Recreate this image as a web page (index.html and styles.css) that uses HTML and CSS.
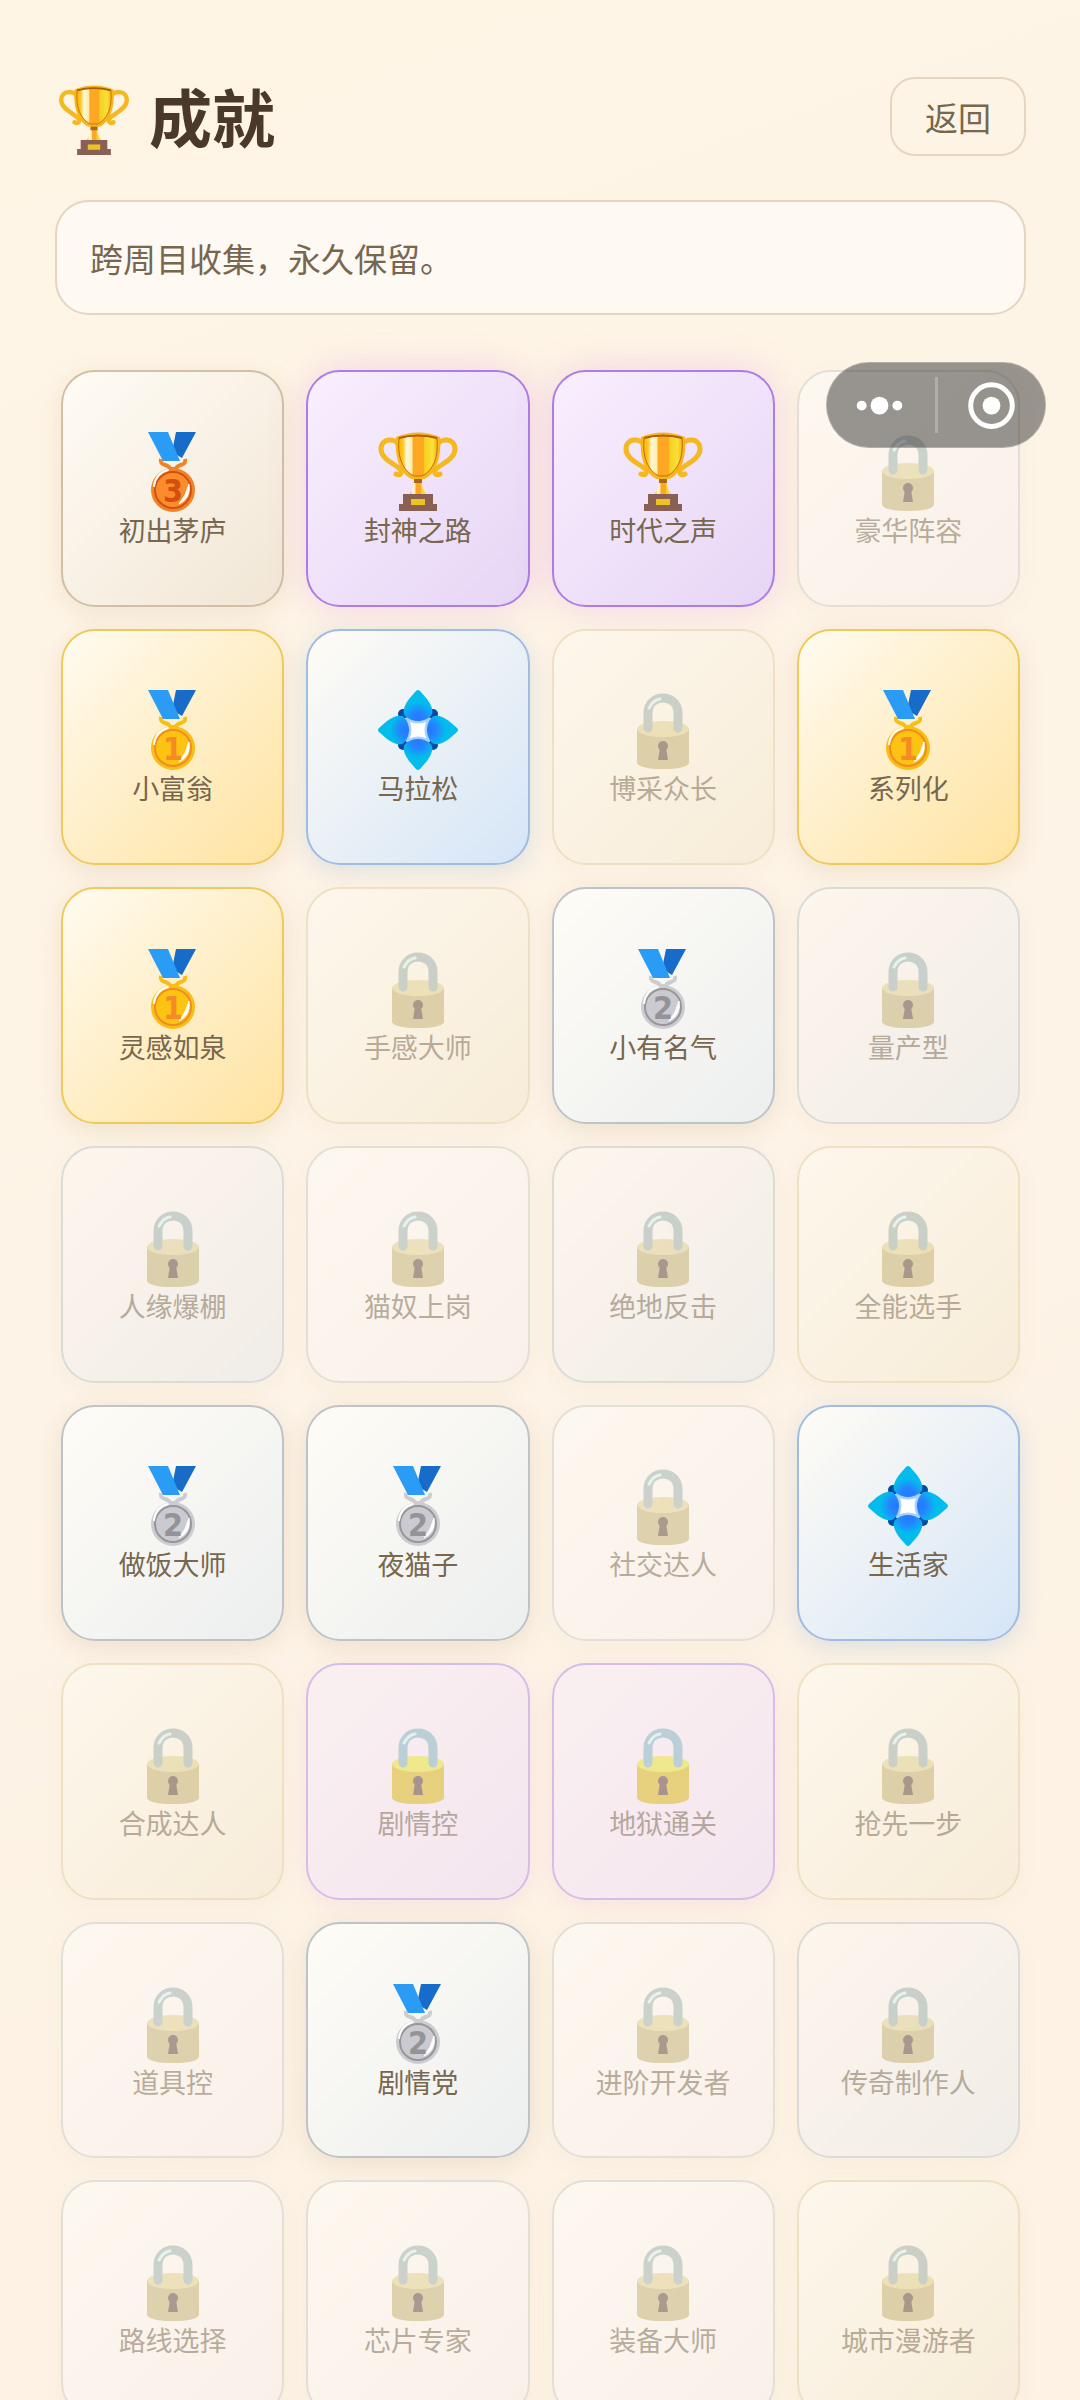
FILE: index.html
```html
<!DOCTYPE html>
<html lang="zh-CN">
<head>
  <meta charset="UTF-8">
  <meta name="viewport" content="width=device-width, initial-scale=1.0">
  <title>成就</title>
  <link rel="stylesheet" href="styles.css">
</head>
<body>
  <!-- shared icons -->
  <svg class="sprite" aria-hidden="true">
    <defs>
      <linearGradient id="cupFill" x1="0" x2="1">
        <stop offset="0" stop-color="#ffb300"/>
        <stop offset=".12" stop-color="#ffc928"/>
        <stop offset=".2" stop-color="#fff8d8"/>
        <stop offset=".34" stop-color="#ffecae"/>
        <stop offset=".38" stop-color="#fca822"/>
        <stop offset=".64" stop-color="#fca822"/>
        <stop offset=".67" stop-color="#f6cf1f"/>
        <stop offset=".88" stop-color="#fbe03c"/>
        <stop offset="1" stop-color="#f2b300"/>
      </linearGradient>
      <radialGradient id="petal" cx="40" cy="29" r="17" gradientUnits="userSpaceOnUse">
        <stop offset="0" stop-color="#2478ff"/>
        <stop offset=".45" stop-color="#2486ff"/>
        <stop offset="1" stop-color="#02bdec"/>
      </radialGradient>

      <symbol id="trophy" viewBox="0 0 80 80">
        <path d="M22 14C17 5 3 6 3 17C3 27 17 32 22 37C25 41 22 44 18 42" fill="none" stroke="#f4b820" stroke-width="5" stroke-linecap="round"/>
        <path d="M58 14C63 5 77 6 77 17C77 27 63 32 58 37C55 41 58 44 62 42" fill="none" stroke="#f4b820" stroke-width="5" stroke-linecap="round"/>
        <path d="M31 63C36 57 37 52 36 46H44C43 52 44 57 49 63Z" fill="url(#cupFill)"/>
        <path d="M18 5Q40-4 62 5C64 26 57 43 46 47H34C23 43 16 26 18 5Z" fill="#f9b51c"/>
        <path d="M21 6Q40 1 59 6C61 25 55 39 44 44H36C25 39 19 25 21 6Z" fill="url(#cupFill)" stroke="#c66e08" stroke-width="1"/>
        <path d="M21 6Q40 1 59 6" fill="none" stroke="#a95e0c" stroke-width="2"/>
        <path d="M36 47H44V51H36Z" fill="#a9661c"/>
        <path d="M25 62H55V72H59V79H21V72H25Z" fill="#8a6054"/>
        <rect x="33" y="67" width="14" height="6" fill="#ecc31f"/>
      </symbol>

      <symbol id="medal" viewBox="0 0 80 80">
        <path d="M43 0H63L49 26L39 20Z" fill="#176bc9"/>
        <circle class="medal-rim" cx="40" cy="58" r="22"/>
        <path class="medal-loop" d="M28 27C26 35 36 31 37 37H43C44 31 54 35 52 27" fill="none" stroke-width="4"/>
        <path d="M15 0H35L47 29H30Z" fill="#2b9cf5"/>
        <circle class="medal-face" cx="40" cy="58" r="18" stroke-width="2"/>
        <path d="M21 54Q23 41 35 38" fill="none" stroke="#fff" stroke-width="2" stroke-linecap="round"/>
        <path d="M56 52Q58 66 46 72Q53 64 56 52" fill="#fff" stroke="#fff"/>
      </symbol>

      <symbol id="diamond" viewBox="0 0 80 80">
        <g fill="#044aa4">
          <circle cx="25" cy="24" r="5"/>
          <circle cx="55" cy="24" r="5"/>
          <circle cx="25" cy="55" r="5"/>
          <circle cx="55" cy="55" r="5"/>
        </g>
        <rect x="28" y="28" width="24" height="24" fill="#8fc4ff"/>
        <path id="leaf" d="M38 1Q40-1 42 1L49 9Q57 20 53 26Q47 31 40 31Q33 31 27 26Q23 20 31 9Z" fill="url(#petal)"/>
        <use href="#leaf" transform="rotate(90 40 40)"/>
        <use href="#leaf" transform="rotate(180 40 40)"/>
        <use href="#leaf" transform="rotate(270 40 40)"/>
        <path d="M30 30Q40 35 50 30Q45 40 50 50Q40 45 30 50Q35 40 30 30Z" fill="#fff" stroke="#a9d2ff" stroke-width="2"/>
      </symbol>

      <symbol id="lock" viewBox="0 0 80 80">
        <path class="lock-body" d="M14 39V73Q17 79 40 79T66 73V39Z"/>
        <ellipse class="lock-top" cx="40" cy="39" rx="26" ry="8"/>
        <path class="lock-shackle" d="M25 38V23C25 3 55 3 55 23V38" fill="none" stroke-width="9" stroke-linecap="round"/>
        <path d="M26 18Q30 10 37 9" fill="none" stroke="#d5f2f2" stroke-width="3" stroke-linecap="round"/>
        <path class="lock-hole" d="M37 58L35 70H45L43 58Z"/>
        <circle class="lock-hole" cx="40" cy="56" r="5"/>
      </symbol>
    </defs>
  </svg>

  <main class="page">
    <header class="page-header">
      <h1 class="page-title"><svg class="title-icon" aria-hidden="true"><use href="#trophy"/></svg>成就</h1>
      <button class="back-btn" type="button">返回</button>
    </header>

    <p class="notice">跨周目收集，永久保留。</p>

    <ul class="grid" id="grid"></ul>
  </main>

  <div class="capsule">
    <button class="capsule-btn" type="button" aria-label="更多">
      <svg viewBox="0 0 110 85"><circle cx="35" cy="43" r="5"/><circle cx="53" cy="43" r="9"/><circle cx="71" cy="43" r="5"/></svg>
    </button>
    <button class="capsule-btn" type="button" aria-label="关闭">
      <svg viewBox="0 0 110 85"><circle cx="56" cy="43" r="21" fill="none" stroke="#fff" stroke-width="5"/><circle cx="56" cy="43" r="9"/></svg>
    </button>
  </div>

  <script src="script.js"></script>
</body>
</html>
```

FILE: styles.css
```css
* {
  box-sizing: border-box;
}

body {
  margin: 0;
  min-height: 100vh;
  background: linear-gradient(160deg, #fff5e5 0%, #fdf3e6 50%, #fdf2e3 100%);
  color: #77674f;
  font-family: "Noto Sans CJK SC", sans-serif;
}

.sprite {
  position: absolute;
  width: 0;
  height: 0;
}

.page {
  padding: 77px 54px 0 55px;
}

/* header */
.page-header {
  display: flex;
  justify-content: space-between;
  align-items: flex-start;
}

.page-title {
  margin: 0;
  padding-left: 3px;
  color: #4a392b;
  font-size: 63px;
  line-height: 75px;
  font-weight: 700;
}

.title-icon {
  width: 72px;
  height: 71px;
  margin-right: 19px;
  vertical-align: -14px;
}

.back-btn {
  width: 136px;
  height: 79px;
  padding: 0;
  border: 2px solid #e5d6c1;
  border-radius: 25px;
  background: transparent;
  color: inherit;
  font-family: inherit;
  font-size: 33px;
}

.notice {
  margin: 44px 0 55px;
  padding: 34px 33px 32px;
  border: 2px solid #e3d5c1;
  border-radius: 34px;
  background: #fef9f3;
  font-size: 33px;
  line-height: 45px;
}

/* achievements */
.grid {
  display: grid;
  grid-template-columns: repeat(4, 1fr);
  gap: 22px;
  margin: 0;
  padding: 0 6px 22px;
  list-style: none;
}

.card {
  display: flex;
  flex-direction: column;
  align-items: center;
  justify-content: center;
  aspect-ratio: 50 / 53;
  padding-top: 3px;
  border: 2px solid var(--line);
  border-radius: 34px;
  background: linear-gradient(135deg, var(--from), var(--to));
  box-shadow: 0 6px 24px var(--glow);
}

.card-icon {
  width: 80px;
  height: 80px;
}

.card-name {
  font-size: 27px;
  line-height: 36px;
}

.bronze {
  --line: #d2bfa4;
  --from: #fffcf5;
  --to: #f1e6d5;
  --glow: rgba(120, 90, 40, .1);
}

.silver {
  --line: #bcc4c8;
  --from: #fffcf6;
  --to: #ecefef;
  --glow: rgba(120, 90, 40, .12);
}

.gold {
  --line: #efc95c;
  --from: #fffbf0;
  --to: #ffe3a0;
  --glow: rgba(150, 110, 50, .14);
}

.diamond {
  --line: #9fbce3;
  --from: #fffcf5;
  --to: #d5e5f7;
  --glow: rgba(90, 140, 200, .2);
}

.mythic {
  --line: #ac7de5;
  --from: #f8effe;
  --to: #e7d5f5;
  --glow: rgba(205, 110, 225, .25);
}

.mythic:not(.locked) {
  box-shadow: 0 0 36px var(--glow);
}

/* locked cards are faded, each tier keeps a hint of its colour */
.locked {
  --lock-body: #c2af70;
  --lock-top: #decf8c;
  --lock-shackle: #9cafac;
}

.locked .card-name,
.locked .card-icon {
  opacity: .5;
}

.locked.bronze {
  --line: #e4dfd6;
  --from: #fdf8ef;
  --to: #f9f0e9;
  --glow: rgba(120, 90, 40, .04);
}

.locked.silver {
  --line: #dadbd8;
  --from: #fdf6ed;
  --to: #f0ece7;
  --glow: rgba(120, 90, 40, .04);
}

.locked.gold {
  --line: #eee0c2;
  --from: #fdf7ec;
  --to: #f7ecd8;
  --glow: rgba(120, 90, 40, .04);
}

.locked.mythic {
  --line: #d5bde8;
  --from: #faf0f0;
  --to: #f3e5ef;
  --glow: rgba(220, 120, 200, .12);
  --lock-body: #dab80e;
  --lock-top: #eae62a;
  --lock-shackle: #80b4c0;
}

.lock-body {
  fill: var(--lock-body);
}

.lock-top {
  fill: var(--lock-top);
}

.lock-shackle {
  stroke: var(--lock-shackle);
}

.lock-hole {
  fill: #5a4034;
}

.medal-num {
  font-family: "DejaVu Sans Condensed", "DejaVu Sans", sans-serif;
  font-size: 32px;
  font-weight: 700;
  text-anchor: middle;
}

.icon-gold {
  --rim: #f9bd16;
  --face: #fdc312;
  --edge: #f08d20;
}

.icon-gold .medal-num {
  fill: #f68a24;
}

.icon-silver {
  --rim: #ccccd1;
  --face: #cbcad0;
  --edge: #97979a;
}

.icon-silver .medal-num {
  fill: #949397;
}

.icon-bronze {
  --rim: #f08328;
  --face: #fb8c2e;
  --edge: #d6500d;
}

.icon-bronze .medal-num {
  fill: #d6500d;
}

.medal-rim {
  fill: var(--rim);
}

.medal-loop {
  stroke: var(--rim);
}

.medal-face {
  fill: var(--face);
  stroke: var(--edge);
}

/* floating menu */
.capsule {
  position: fixed;
  top: 362px;
  right: 34px;
  display: flex;
  width: 220px;
  height: 86px;
  border: 1px solid rgba(255, 255, 255, .25);
  border-radius: 43px;
  background: rgba(50, 50, 50, .5);
}

.capsule-btn {
  flex: 1;
  padding: 0;
  border: 0;
  background: none;
}

.capsule-btn svg {
  display: block;
  width: 100%;
  fill: #fff;
}

.capsule::after {
  content: "";
  position: absolute;
  left: 108px;
  top: 14px;
  width: 3px;
  height: 56px;
  background: rgba(255, 255, 255, .25);
}
```

FILE: script.js
```js
const achievements = [
  ['初出茅庐', 'bronze', true],
  ['封神之路', 'mythic', true],
  ['时代之声', 'mythic', true],
  ['豪华阵容', 'bronze', false],
  ['小富翁', 'gold', true],
  ['马拉松', 'diamond', true],
  ['博采众长', 'gold', false],
  ['系列化', 'gold', true],
  ['灵感如泉', 'gold', true],
  ['手感大师', 'gold', false],
  ['小有名气', 'silver', true],
  ['量产型', 'silver', false],
  ['人缘爆棚', 'silver', false],
  ['猫奴上岗', 'bronze', false],
  ['绝地反击', 'silver', false],
  ['全能选手', 'gold', false],
  ['做饭大师', 'silver', true],
  ['夜猫子', 'silver', true],
  ['社交达人', 'bronze', false],
  ['生活家', 'diamond', true],
  ['合成达人', 'gold', false],
  ['剧情控', 'mythic', false],
  ['地狱通关', 'mythic', false],
  ['抢先一步', 'gold', false],
  ['道具控', 'bronze', false],
  ['剧情党', 'silver', true],
  ['进阶开发者', 'bronze', false],
  ['传奇制作人', 'silver', false],
  ['路线选择', 'bronze', false],
  ['芯片专家', 'bronze', false],
  ['装备大师', 'bronze', false],
  ['城市漫游者', 'gold', false]
];

const medals = { gold: 1, silver: 2, bronze: 3 };

function icon(tier, unlocked) {
  if (!unlocked) return '<use href="#lock"/>';
  if (tier === 'mythic') return '<use href="#trophy"/>';
  if (tier === 'diamond') return '<use href="#diamond"/>';
  return `<use href="#medal"/><text class="medal-num" x="40" y="70">${medals[tier]}</text>`;
}

document.getElementById('grid').innerHTML = achievements.map(([name, tier, unlocked]) => `
  <li class="card ${tier}${unlocked ? '' : ' locked'}">
    <svg class="card-icon icon-${tier}" viewBox="0 0 80 80" aria-hidden="true">${icon(tier, unlocked)}</svg>
    <span class="card-name">${name}</span>
  </li>`).join('');
```
